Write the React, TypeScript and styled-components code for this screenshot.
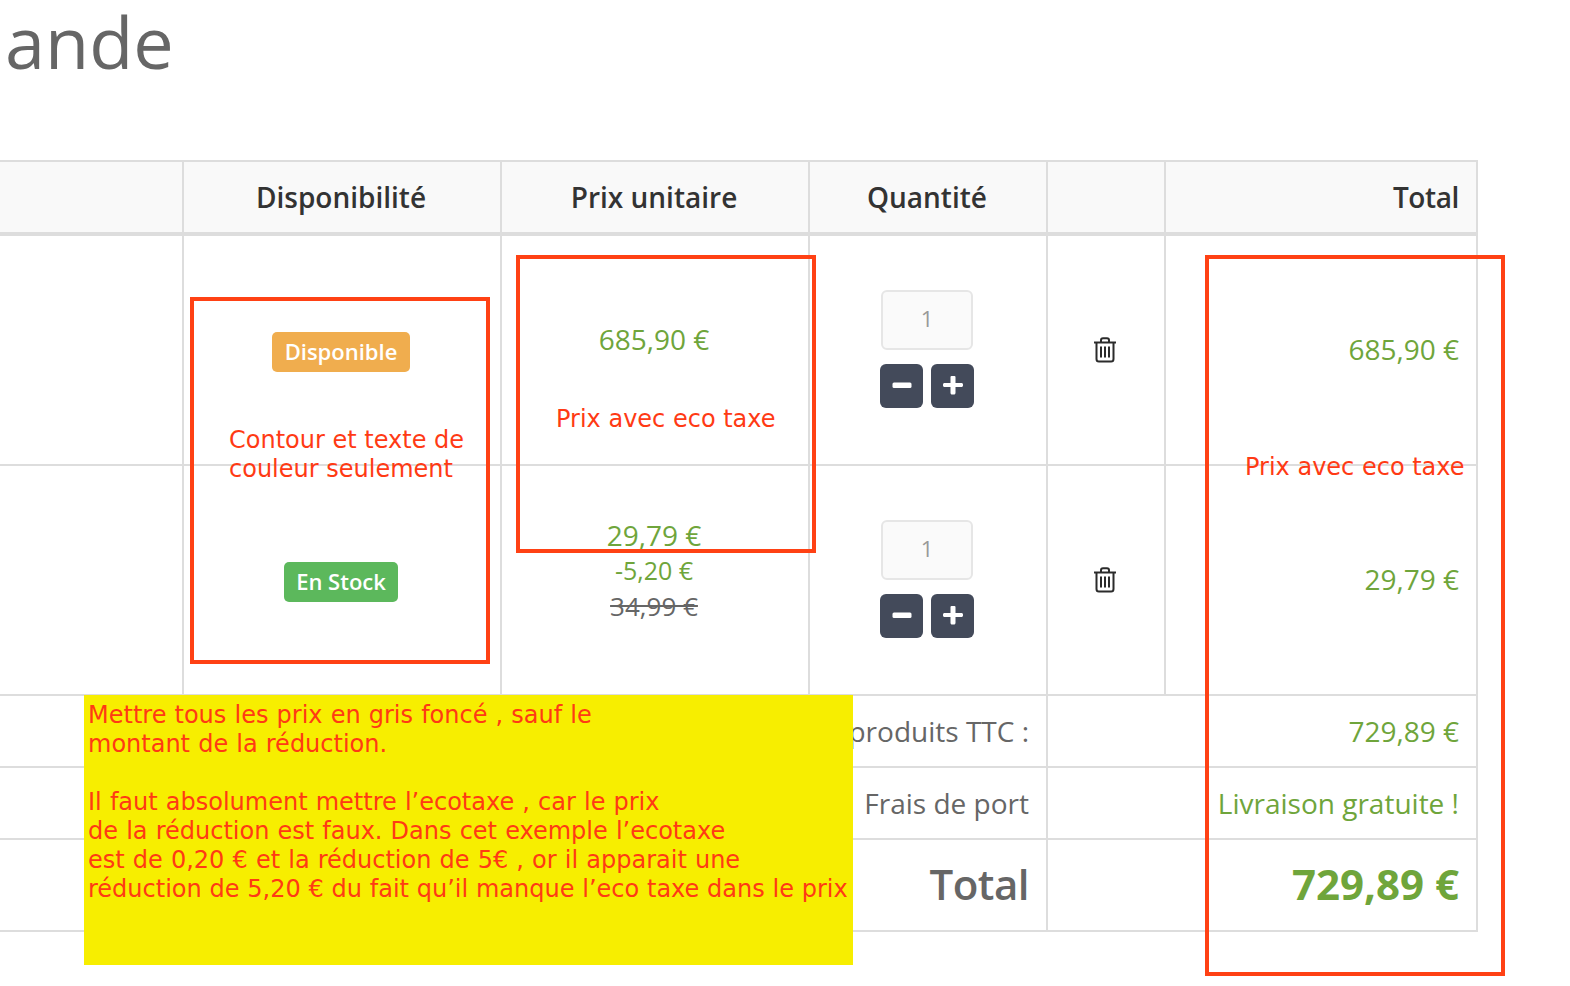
import React from 'react';
import styled, { createGlobalStyle } from 'styled-components';

const GlobalStyle = createGlobalStyle`
  html, body {
    margin: 0;
    padding: 0;
    background: #fff;
    overflow: hidden;
  }
`;

const Page = styled.div`
  position: relative;
  width: 1570px;
  height: 986px;
  overflow: hidden;
  font-family: 'Open Sans', sans-serif;
  color: #666;
  text-rendering: optimizeLegibility;
`;

const PageTitle = styled.h1`
  margin: 0;
  height: 160px;
  padding-left: 5px;
  box-sizing: border-box;
  font-size: 72px;
  line-height: 82px;
  font-weight: 400;
  color: #666;
`;

const CartTable = styled.table`
  margin-left: -11px;
  width: 1487px;
  table-layout: fixed;
  border-collapse: collapse;
  font-size: 28px;

  th, td {
    border: 2px solid #ddd;
    padding: 0 17px 0 18px;
  }
`;

const HeadRow = styled.tr`
  height: 73px;
  background: #f9f9f9;
`;

const HeadCell = styled.th<{ $right?: boolean }>`
  && {
    border-bottom-width: 4px;
    padding: ${(p) => (p.$right ? '0 17px 0 18px' : '0 19px 0 17px')};
  }
  font-size: 28px;
  font-weight: 600;
  color: #333;
  letter-spacing: ${(p) => (p.$right ? '-0.4px' : '0')};
  text-align: ${(p) => (p.$right ? 'right' : 'center')};
`;

const ProductRow = styled.tr<{ $height: number }>`
  height: ${(p) => p.$height}px;
`;

const CenterCell = styled.td`
  && {
    padding: 0 19px 0 17px;
  }
  text-align: center;
  vertical-align: middle;
`;

const TotalCell = styled.td`
  text-align: right;
  vertical-align: middle;
  color: #6fa53b;
`;

const LineTotal = styled(TotalCell)`
  && {
    padding-bottom: 2px;
  }
`;

const Badge = styled.span<{ $tone: string; $pad: number }>`
  display: inline-block;
  margin-top: 3px;
  padding: 0 ${(p) => p.$pad}px;
  height: 40px;
  line-height: 38px;
  border-radius: 5px;
  background: ${(p) => p.$tone};
  color: #fff;
  font-size: 22px;
  font-weight: 600;
`;

const PriceStack = styled.div<{ $lift: number }>`
  display: flex;
  flex-direction: column;
  margin-bottom: ${(p) => p.$lift}px;
  line-height: 35.5px;
`;

const Price = styled.span`
  color: #6fa53b;
`;

const Discount = styled.span`
  color: #6fa53b;
  font-size: 25px;
`;

const OldPrice = styled.span`
  color: #666;
  font-size: 26px;
  text-decoration: line-through;
`;

const QuantityBox = styled.div`
  display: flex;
  flex-direction: column;
  align-items: center;
  gap: 14px;
  margin-bottom: 2px;
`;

const QuantityInput = styled.div`
  width: 92px;
  height: 60px;
  box-sizing: border-box;
  border: 2px solid #e6e6e6;
  border-radius: 6px;
  background: #fafafa;
  color: #999;
  font-size: 22px;
  line-height: 52px;
  text-align: center;
`;

const StepButtons = styled.div`
  display: flex;
  gap: 8px;
`;

const StepButton = styled.button`
  width: 43px;
  height: 44px;
  padding: 0;
  border: 0;
  border-radius: 6px;
  background: #434a5a;
  display: flex;
  align-items: center;
  justify-content: center;
`;

const SummaryRow = styled.tr<{ $height: number }>`
  height: ${(p) => p.$height}px;
`;

const SummaryLabel = styled.td`
  text-align: right;
  vertical-align: middle;
  color: #666;
`;

const GrandLabel = styled(SummaryLabel)`
  && {
    padding-bottom: 4px;
  }
  font-size: 42px;
  font-weight: 600;
  letter-spacing: -0.5px;
`;

const GrandValue = styled(TotalCell)`
  && {
    padding-bottom: 4px;
  }
  font-size: 42px;
  font-weight: 700;
`;

const TrashGlyph = styled.svg`
  display: block;
  margin: 0 auto;
`;

const RedFrame = styled.div<{ $x: number; $y: number; $w: number; $h: number }>`
  position: absolute;
  left: ${(p) => p.$x}px;
  top: ${(p) => p.$y}px;
  width: ${(p) => p.$w}px;
  height: ${(p) => p.$h}px;
  box-sizing: border-box;
  border: 4px solid #ff4114;
`;

const Note = styled.div<{ $x: number; $y: number }>`
  position: absolute;
  left: ${(p) => p.$x}px;
  top: ${(p) => p.$y}px;
  font-family: 'DejaVu Sans', Verdana, sans-serif;
  font-size: 24px;
  line-height: 29px;
  color: #ff3a14;
  white-space: pre;
`;

const YellowNote = styled.div`
  position: absolute;
  left: 84px;
  top: 695px;
  width: 769px;
  height: 270px;
  box-sizing: border-box;
  padding: 6px 0 0 4px;
  background: #f7ee00;
  font-family: 'DejaVu Sans', Verdana, sans-serif;
  font-size: 24px;
  line-height: 29px;
  word-spacing: 0.5px;
  color: #ff3a14;
  white-space: pre;
`;

const TightLine = styled.span`
  word-spacing: 0.15px;
`;

const TrashIcon = () => (
  <TrashGlyph width="24" height="26" viewBox="0 0 24 26" fill="none" stroke="#2b2b2b" strokeWidth="2">
    <path d="M1 5.500h22" />
    <path d="M8 5V3.200C8 2 8.800 1.200 10 1.200h4c1.200 0 2 .8 2 2V5" />
    <path d="M3.500 5.500V22c0 1.600.9 2.600 2.400 2.600h12.200c1.500 0 2.400-1 2.400-2.600V5.500" />
    <path d="M8 9.500v11M12 9.500v11M16 9.500v11" />
  </TrashGlyph>
);

const MinusIcon = () => (
  <svg width="20" height="20" viewBox="0 0 20 20">
    <rect x="0.5" y="6.500" width="19" height="5.500" rx="1.500" fill="#fff" />
  </svg>
);

const PlusIcon = () => (
  <svg width="20" height="20" viewBox="0 0 20 20">
    <path d="M7.500 1C7.500.4 8.200 0 9 0h2c.8 0 1.500.4 1.500 1v6h6c.8 0 1.500.7 1.500 1.500v1c0 .8-.7 1.500-1.500 1.500h-6v6c0 .8-.7 1.500-1.500 1.500H9c-.8 0-1.500-.7-1.500-1.500v-6h-6C.7 11 0 10.300 0 9.500v-1C0 7.700.7 7 1.500 7h6z" fill="#fff" />
  </svg>
);

const Quantity = () => (
  <QuantityBox>
    <QuantityInput>1</QuantityInput>
    <StepButtons>
      <StepButton><MinusIcon /></StepButton>
      <StepButton><PlusIcon /></StepButton>
    </StepButtons>
  </QuantityBox>
);

const App: React.FC = () => {
  return (
    <Page>
      <GlobalStyle />
      <PageTitle>ande</PageTitle>
      <CartTable>
        <colgroup>
          <col style={{ width: 193 }} />
          <col style={{ width: 318 }} />
          <col style={{ width: 308 }} />
          <col style={{ width: 238 }} />
          <col style={{ width: 118 }} />
          <col style={{ width: 312 }} />
        </colgroup>
        <thead>
          <HeadRow>
            <HeadCell />
            <HeadCell>Disponibilité</HeadCell>
            <HeadCell>Prix unitaire</HeadCell>
            <HeadCell>Quantité</HeadCell>
            <HeadCell />
            <HeadCell $right>Total</HeadCell>
          </HeadRow>
        </thead>
        <tbody>
          <ProductRow $height={231}>
            <td />
            <CenterCell><Badge $tone="#f0ad4e" $pad={13}>Disponible</Badge></CenterCell>
            <CenterCell>
              <PriceStack $lift={20}>
                <Price>685,90 €</Price>
              </PriceStack>
            </CenterCell>
            <CenterCell><Quantity /></CenterCell>
            <CenterCell><TrashIcon /></CenterCell>
            <LineTotal>685,90 €</LineTotal>
          </ProductRow>
          <ProductRow $height={230}>
            <td />
            <CenterCell><Badge $tone="#5cb85c" $pad={12}>En Stock</Badge></CenterCell>
            <CenterCell>
              <PriceStack $lift={18}>
                <Price>29,79 €</Price>
                <Discount>-5,20 €</Discount>
                <OldPrice>34,99 €</OldPrice>
              </PriceStack>
            </CenterCell>
            <CenterCell><Quantity /></CenterCell>
            <CenterCell><TrashIcon /></CenterCell>
            <LineTotal>29,79 €</LineTotal>
          </ProductRow>
          <SummaryRow $height={72}>
            <SummaryLabel colSpan={4}>Total produits TTC :</SummaryLabel>
            <TotalCell colSpan={2}>729,89 €</TotalCell>
          </SummaryRow>
          <SummaryRow $height={72}>
            <SummaryLabel colSpan={4}>Frais de port</SummaryLabel>
            <TotalCell colSpan={2}>Livraison gratuite !</TotalCell>
          </SummaryRow>
          <SummaryRow $height={92}>
            <GrandLabel colSpan={4}>Total</GrandLabel>
            <GrandValue colSpan={2}>729,89 €</GrandValue>
          </SummaryRow>
        </tbody>
      </CartTable>

      <RedFrame $x={190} $y={297} $w={300} $h={367} />
      <RedFrame $x={516} $y={255} $w={300} $h={298} />
      <RedFrame $x={1205} $y={255} $w={300} $h={721} />
      <Note $x={229} $y={426}>{'Contour et texte de\ncouleur seulement'}</Note>
      <Note $x={556} $y={405}>Prix avec eco taxe</Note>
      <Note $x={1245} $y={453}>Prix avec eco taxe</Note>
      <YellowNote>
        {'Mettre tous les prix en gris foncé , sauf le\nmontant de la réduction.\n\nIl faut absolument mettre l’ecotaxe , car le prix\nde la réduction est faux. Dans cet exemple l’ecotaxe\nest de 0,20 € et la réduction de 5€ , or il apparait une\n'}
        <TightLine>réduction de 5,20 € du fait qu’il manque l’eco taxe dans le prix</TightLine>
      </YellowNote>
    </Page>
  );
};

export default App;
